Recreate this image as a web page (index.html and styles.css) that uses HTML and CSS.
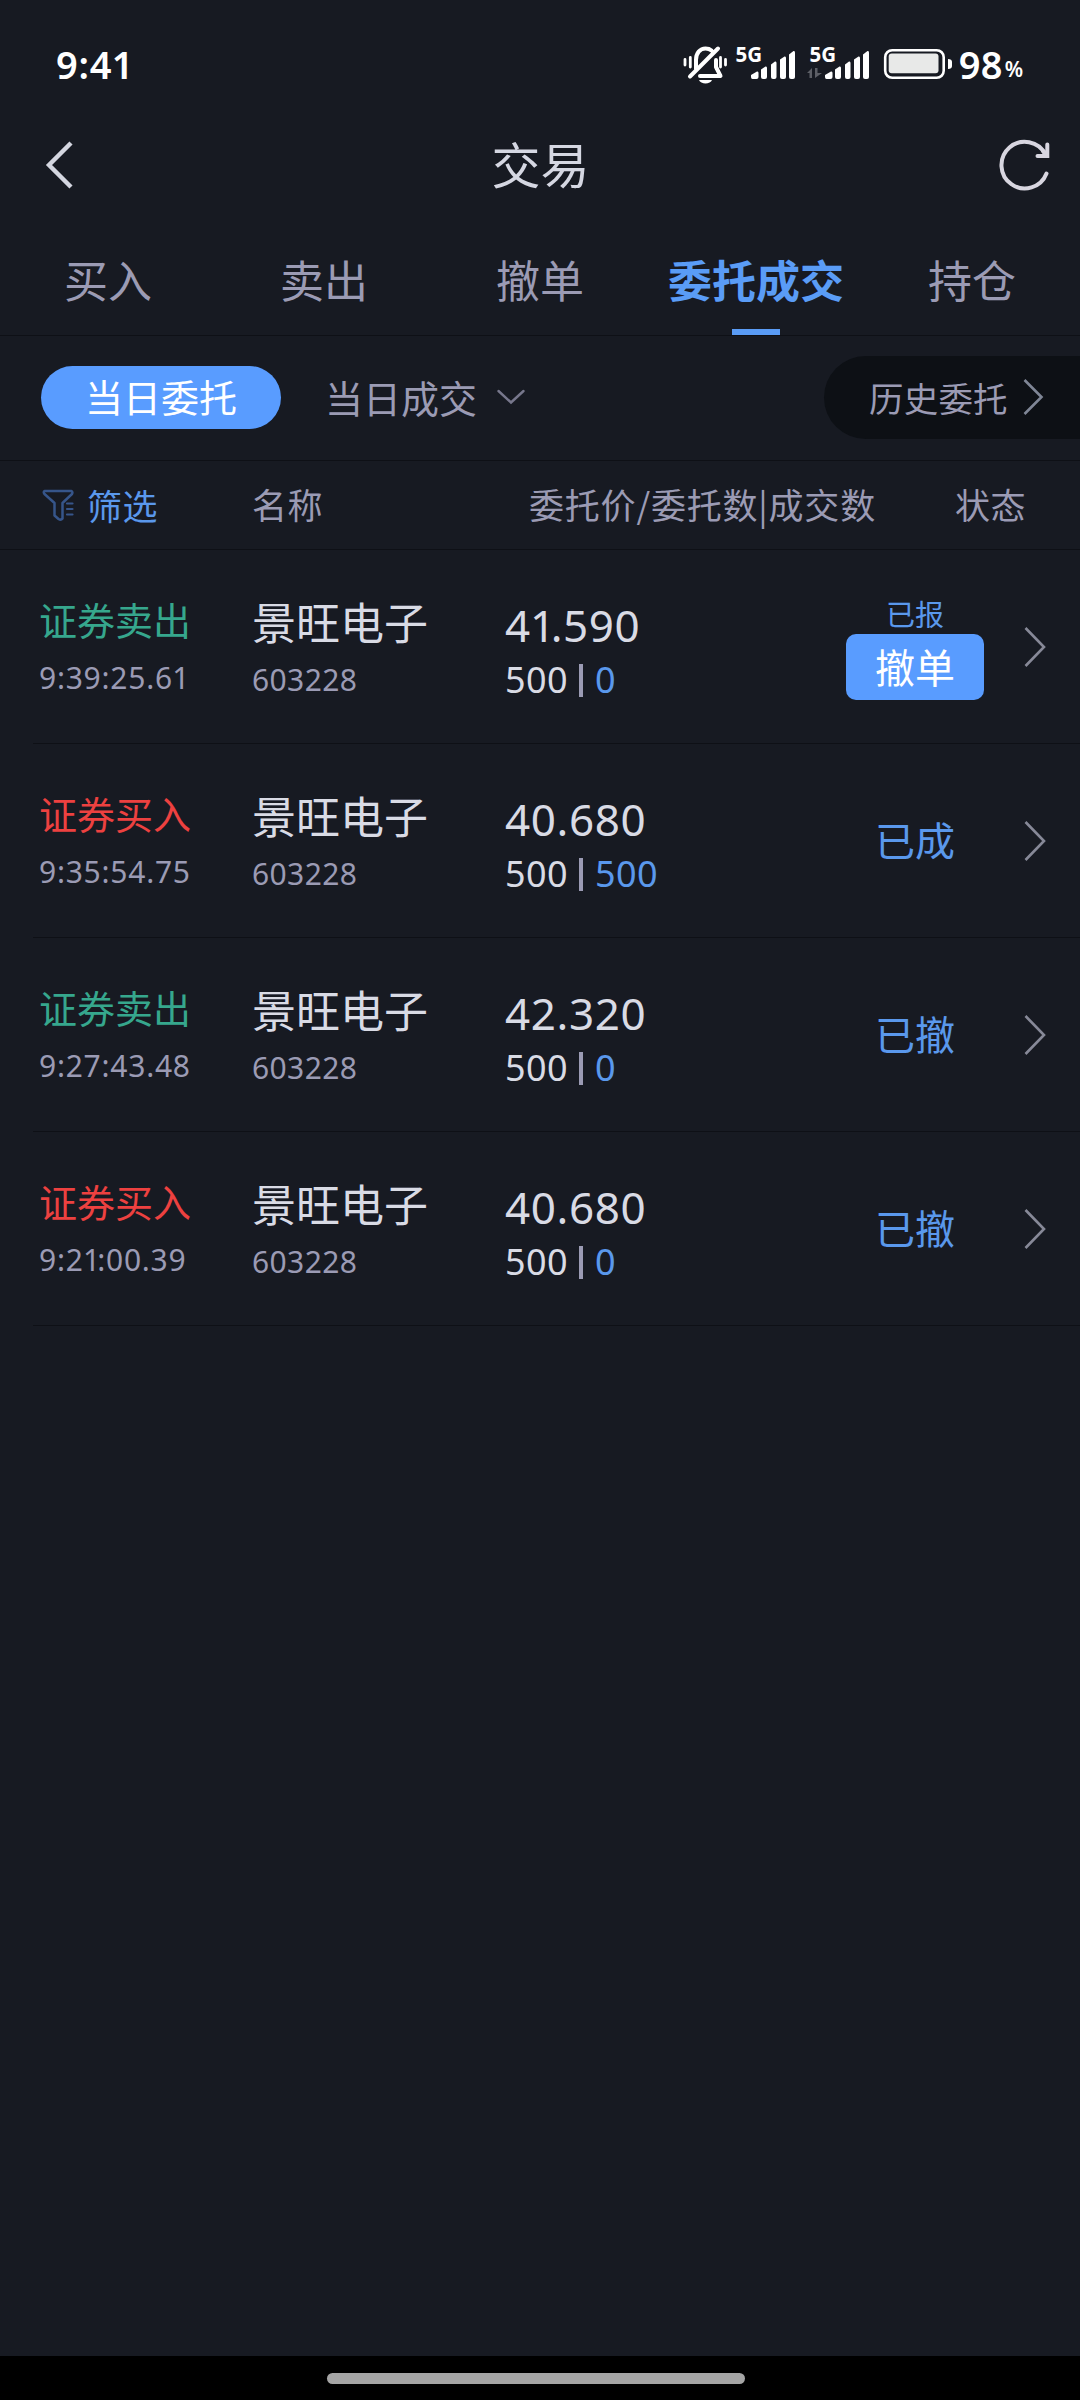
FILE: index.html
```html
<!DOCTYPE html>
<html lang="zh-CN">
<head>
<meta charset="utf-8">
<title>交易</title>
<link rel="stylesheet" href="styles.css">
</head>
<body>
<div class="screen">
  <div class="statusbar">
    <span class="clock num">9:4<span class="one">1</span></span>
    <svg class="status-icons" width="276" height="50" viewBox="680 40 276 50" fill="#fff">
      <g fill="none" stroke="#fff" stroke-width="4" stroke-linecap="round" stroke-linejoin="round">
        <path d="M696 69V60C696 53 700 48.500 705.500 48.500C708 48.500 710 49.200 711.500 50.500M690 76.500L718 48.500M716 60V67L720.500 76H700"/>
        <path d="M685 59.500V65M690.300 57.500V67M720.500 57.500V67M725.500 59.500V65" stroke-width="2.800"/>
      </g>
      <path d="M699 80H712C710.500 84.500 700.500 84.500 699 80Z"/>
      <text class="net" x="735.500" y="61.500">5G</text>
      <g id="bars">
        <path d="M751 75L757 71.500Q758.500 71 758.500 73V77Q758.500 79 756.500 79H752.500Q751 79 751 77Z"/>
        <path d="M761 69.500L765.500 66.500Q767 66 767 68V77Q767 79 765 79H763Q761 79 761 77Z"/>
        <path d="M771 64.500L775 61.500Q776.500 61 776.500 63V77Q776.500 79 774.500 79H773Q771 79 771 77Z"/>
        <path d="M780 59.500L784.500 56.500Q786 56 786 58V77Q786 79 784 79H782Q780 79 780 77Z"/>
        <path d="M789 54.500L793.500 51Q795 50.500 795 52.500V77Q795 79 793 79H791Q789 79 789 77Z"/>
      </g>
      <text class="net" x="809.500" y="61.500">5G</text>
      <use href="#bars" x="74"/>
      <path d="M807 73L812 68V78H809.500V73ZM815 68H817.500V73H822L815 78Z" fill="#5d5f66"/>
      <rect x="885.200" y="50.200" width="58.500" height="27.600" rx="7" fill="none" stroke="#fff" stroke-width="2.600"/>
      <rect x="888.700" y="53.500" width="49.800" height="19.700" rx="3" fill="#e8e9e8"/>
      <path d="M948 59Q952 59 952 62V66Q952 69 948 69Z"/>
    </svg>
    <span class="level num">98</span><span class="percent num">%</span>
  </div>

  <div class="titlebar">
    <svg width="30" height="52" viewBox="45 139 30 52" fill="none" stroke="#d4d6e0" stroke-width="4.400"><path d="M71 143L49 165L71 187"/></svg>
    <h1 class="title">交易</h1>
    <svg width="56" height="56" viewBox="997 136 56 56" fill="none" stroke="#d8d6e0" stroke-width="4" stroke-linecap="round"><path d="M1046.500 172.500A23.300 23.300 0 1 1 1045.500 153.500"/><path d="M1047.300 143.500V155H1037.500M1043 150L1047.300 155" stroke-linecap="round"/></svg>
  </div>

  <div class="tabs">
    <div class="tab">买入</div>
    <div class="tab">卖出</div>
    <div class="tab">撤单</div>
    <div class="tab active">委托成交</div>
    <div class="tab">持仓</div>
  </div>

  <div class="subtabs">
    <div class="pill">当日委托</div>
    <div class="sub">当日成交</div>
    <svg class="down" width="32" height="20" viewBox="0 0 32 20" fill="none" stroke="#77778c" stroke-width="2.400" stroke-linecap="round"><path d="M3.500 4L16 15.500L28.500 4"/></svg>
    <div class="history">历史委托
      <svg width="24" height="40" viewBox="0 0 24 40" fill="none" stroke="#7f8696" stroke-width="2.600"><path d="M2.500 3L19.500 20L2.500 37"/></svg>
    </div>
  </div>

  <div class="thead">
    <div class="filter">
      <svg width="32" height="34" viewBox="42 487 32 34" fill="none" stroke="#36558a" stroke-width="2.500" stroke-linejoin="round" stroke-linecap="round"><path d="M44.500 490H71.500Q73 491 72 493L62.500 502V517.500Q61 519.500 58.500 518L54.500 514.500V502L44.500 493Q43 491 44.500 490Z"/><path d="M67 502.500H72.500M67 508H72.500M67 513.500H72.500" stroke-width="2.200"/></svg>
      <span>筛选</span>
    </div>
    <div>名称</div>
    <div class="amounts">委托价/委托数|成交数</div>
    <div class="state">状态</div>
  </div>

  <div class="row">
    <div class="kind"><div class="side sell">证券卖出</div><div class="time num">9:39:25.6<span class="one">1</span></div></div>
    <div class="stock"><div class="name">景旺电子</div><div class="code num">603228</div></div>
    <div class="order num"><div class="price">4<span class="one">1</span>.590</div><div class="qty">500<i></i><b>0</b></div></div>
    <div class="status pending"><div class="sent">已报</div><div class="cancel">撤单</div></div>
    <svg class="go" viewBox="0 0 24 44"><path d="M1.500 3L20 22L1.500 41"/></svg>
  </div>
  <div class="row">
    <div class="kind"><div class="side buy">证券买入</div><div class="time num">9:35:54.75</div></div>
    <div class="stock"><div class="name">景旺电子</div><div class="code num">603228</div></div>
    <div class="order num"><div class="price">40.680</div><div class="qty">500<i></i><b>500</b></div></div>
    <div class="status">已成</div>
    <svg class="go" viewBox="0 0 24 44"><path d="M1.500 3L20 22L1.500 41"/></svg>
  </div>
  <div class="row">
    <div class="kind"><div class="side sell">证券卖出</div><div class="time num">9:27:43.48</div></div>
    <div class="stock"><div class="name">景旺电子</div><div class="code num">603228</div></div>
    <div class="order num"><div class="price">42.320</div><div class="qty">500<i></i><b>0</b></div></div>
    <div class="status">已撤</div>
    <svg class="go" viewBox="0 0 24 44"><path d="M1.500 3L20 22L1.500 41"/></svg>
  </div>
  <div class="row">
    <div class="kind"><div class="side buy">证券买入</div><div class="time num">9:2<span class="one">1</span>:00.39</div></div>
    <div class="stock"><div class="name">景旺电子</div><div class="code num">603228</div></div>
    <div class="order num"><div class="price">40.680</div><div class="qty">500<i></i><b>0</b></div></div>
    <div class="status">已撤</div>
    <svg class="go" viewBox="0 0 24 44"><path d="M1.500 3L20 22L1.500 41"/></svg>
  </div>

  <div class="navbar"><div class="handle"></div></div>
</div>
</body>
</html>
```
FILE: styles.css
```css
* { box-sizing: border-box; }
body {
  margin: 0;
  background: #171a22;
  color: #9b9bb4;
  font-family: "Noto Sans CJK SC", sans-serif;
}
.screen {
  width: 1080px;
  height: 2400px;
  display: flex;
  flex-direction: column;
  overflow: hidden;
}
.num { font-family: "Noto Sans", sans-serif; }
.one { letter-spacing: -0.1em; margin-left: -0.02em; }

.statusbar {
  height: 104px;
  padding: 0 57px 0 56px;
  display: flex;
  color: #fff;
}
.clock, .level {
  font-size: 38px;
  line-height: 50px;
  font-weight: 600;
  padding-top: 39px;
}
.clock { width: 624px; letter-spacing: 0.8px; }
.status-icons { margin-top: 40px; flex: none; }
.net { font: 700 20.500px "Noto Sans", sans-serif; }
.level { width: 49px; padding-left: 3px; letter-spacing: 0.3px; }
.percent {
  font-size: 21px;
  font-weight: 600;
  line-height: 30px;
  padding-top: 54px;
}

.titlebar {
  height: 126px;
  padding: 0 27px 4px 45px;
  display: flex;
  align-items: center;
  justify-content: space-between;
}
.title {
  margin: 0 0 5px 9px;
  color: #d5d7e2;
  font-size: 49px;
  line-height: 60px;
  font-weight: 400;
}

.tabs {
  height: 106px;
  display: grid;
  grid-template-columns: repeat(5, 216px);
  border-bottom: 1px solid #0e1016;
  font-size: 44px;
  line-height: 99px;
  text-align: center;
}
.tab.active {
  color: #5a9cf6;
  font-weight: 600;
  display: flex;
  flex-direction: column;
  align-items: center;
  justify-content: space-between;
}
.tab.active::after {
  content: "";
  width: 48px;
  height: 6px;
  flex: none;
  background: #5a9cf6;
}

.subtabs {
  height: 125px;
  padding: 0 0 2px 41px;
  display: flex;
  align-items: center;
  border-bottom: 1px solid #0e1016;
  font-size: 38px;
  line-height: 60px;
}
.pill {
  width: 240px;
  height: 63px;
  border-radius: 32px;
  background: #599cff;
  color: #fff;
  text-align: center;
}
.sub { margin-left: 44px; }
.down { margin-left: 18px; }
.history {
  width: 256px;
  height: 83px;
  margin-left: auto;
  padding-left: 45px;
  display: flex;
  align-items: center;
  gap: 14px;
  border-radius: 42px 0 0 42px;
  background: #0d1015;
  font-size: 34.500px;
  letter-spacing: 0.2px;
}

.thead {
  height: 89px;
  padding-left: 42px;
  display: grid;
  grid-template-columns: 210px 277px 426px 1fr;
  border-bottom: 1px solid #0e1016;
  font-size: 35px;
  line-height: 86px;
  letter-spacing: 0.4px;
}
.filter {
  display: flex;
  align-items: center;
  gap: 13px;
  color: #5a98ec;
}
.amounts { letter-spacing: 0.8px; white-space: nowrap; }

.row {
  height: 194px;
  margin-left: 33px;
  padding-left: 6px;
  display: grid;
  grid-template-columns: 213px 252px 342px 138px 1fr;
  border-bottom: 1px solid #0e1016;
}
.kind { padding-top: 44px; }
.stock { padding-top: 46px; }
.order { padding: 50px 0 0 1px; color: #d9dbe5; }
.side { font-size: 38px; line-height: 50px; }
.sell { color: #36a78d; }
.buy { color: #ed4140; }
.time, .code {
  margin-top: 14px;
  font-size: 30px;
  line-height: 40px;
  letter-spacing: 0.4px;
}
.time { letter-spacing: 0.75px; }
.name { color: #d9dbe5; font-size: 44px; line-height: 50px; }
.price { font-size: 44px; line-height: 50px; letter-spacing: 0.6px; }
.qty {
  margin-top: 10px;
  display: flex;
  align-items: center;
  font-size: 36px;
  line-height: 40px;
  letter-spacing: 0.4px;
}
.qty i { width: 4px; height: 33px; margin: 0 12px 0 11px; background: #9b9bb4; }
.qty b { color: #5a98ec; font-weight: 400; }
.status {
  display: flex;
  flex-direction: column;
  align-items: center;
  justify-content: center;
  padding-bottom: 3px;
  color: #5a98ec;
  font-size: 40px;
  line-height: 50px;
}
.status.pending { justify-content: flex-start; padding-top: 46px; }
.sent { font-size: 29px; line-height: 34px; }
.cancel {
  width: 138px;
  height: 66px;
  margin-top: 4px;
  border-radius: 10px;
  background: #599cff;
  color: #fff;
  text-align: center;
  line-height: 65px;
}
.go {
  width: 24px;
  height: 44px;
  margin: 75px 0 0 40px;
  fill: none;
  stroke: #878998;
  stroke-width: 2.600;
}

.navbar {
  height: 44px;
  margin-top: auto;
  padding-top: 17px;
  background: #000;
}
.handle {
  width: 418px;
  height: 11px;
  margin-left: 327px;
  border-radius: 6px;
  background: #a5a5a5;
}
```
